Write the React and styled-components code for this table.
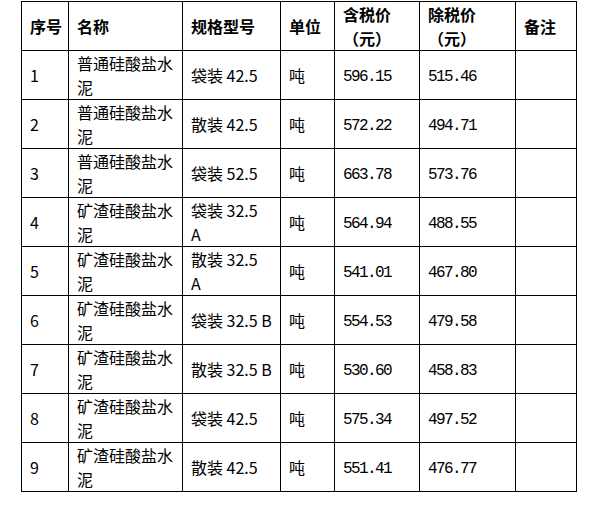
import React from "react";
import styled, { createGlobalStyle } from "styled-components";

const Global = createGlobalStyle`
  html, body { margin: 0; padding: 0; background: #fff; }
  body { font-family: "Noto Sans CJK SC", "Noto Sans", sans-serif; }
`;

const Page = styled.div`
  padding: 1px 0 0 21px;
`;

const Table = styled.table`
  border-collapse: collapse;
  table-layout: fixed;
  width: 556px;
  font-family: "Noto Sans CJK SC", "Noto Sans", sans-serif;
  font-size: 16px;
  line-height: 24px;
  color: #000;
`;

const Row = styled.tr`
  height: 49px;
`;

const Cell = styled.td`
  border: 1px solid #000;
  padding: 0 4px 0 8px;
  vertical-align: middle;
  text-align: left;
  font-weight: ${(p) => (p.$head ? 700 : 400)};
  white-space: ${(p) => (p.$nowrap ? "nowrap" : "normal")};
  overflow: visible;
`;

const Num = styled.span`
  font-family: "Liberation Mono", "DejaVu Sans Mono", monospace;
  font-size: 16px;
  letter-spacing: -1.6px;
`;

const widths = [47, 114, 98, 54, 85, 96, 61];

const rows = [
  ["1", "普通硅酸盐水泥", "袋装 42.5", "596.15", "515.46"],
  ["2", "普通硅酸盐水泥", "散装 42.5", "572.22", "494.71"],
  ["3", "普通硅酸盐水泥", "袋装 52.5", "663.78", "573.76"],
  ["4", "矿渣硅酸盐水泥", ["袋装 32.5", "A"], "564.94", "488.55"],
  ["5", "矿渣硅酸盐水泥", ["散装 32.5", "A"], "541.01", "467.80"],
  ["6", "矿渣硅酸盐水泥", "袋装 32.5 B", "554.53", "479.58"],
  ["7", "矿渣硅酸盐水泥", "散装 32.5 B", "530.60", "458.83"],
  ["8", "矿渣硅酸盐水泥", "袋装 42.5", "575.34", "497.52"],
  ["9", "矿渣硅酸盐水泥", "散装 42.5", "551.41", "476.77"],
];

export default function App() {
  return (
    <Page>
      <Global />
      <Table>
        <colgroup>
          {widths.map((w, i) => (
            <col key={i} style={{ width: w }} />
          ))}
        </colgroup>
        <thead>
          <Row>
            <Cell as="th" $head $nowrap>序号</Cell>
            <Cell as="th" $head>名称</Cell>
            <Cell as="th" $head>规格型号</Cell>
            <Cell as="th" $head>单位</Cell>
            <Cell as="th" $head>含税价<br />（元）</Cell>
            <Cell as="th" $head>除税价<br />（元）</Cell>
            <Cell as="th" $head>备注</Cell>
          </Row>
        </thead>
        <tbody>
          {rows.map((r) => (
            <Row key={r[0]}>
              <Cell>{r[0]}</Cell>
              <Cell>{r[1]}</Cell>
              <Cell $nowrap>
                {Array.isArray(r[2]) ? (
                  <>
                    {r[2][0]}
                    <br />
                    {r[2][1]}
                  </>
                ) : (
                  r[2]
                )}
              </Cell>
              <Cell>吨</Cell>
              <Cell>
                <Num>{r[3]}</Num>
              </Cell>
              <Cell>
                <Num>{r[4]}</Num>
              </Cell>
              <Cell></Cell>
            </Row>
          ))}
        </tbody>
      </Table>
    </Page>
  );
}
